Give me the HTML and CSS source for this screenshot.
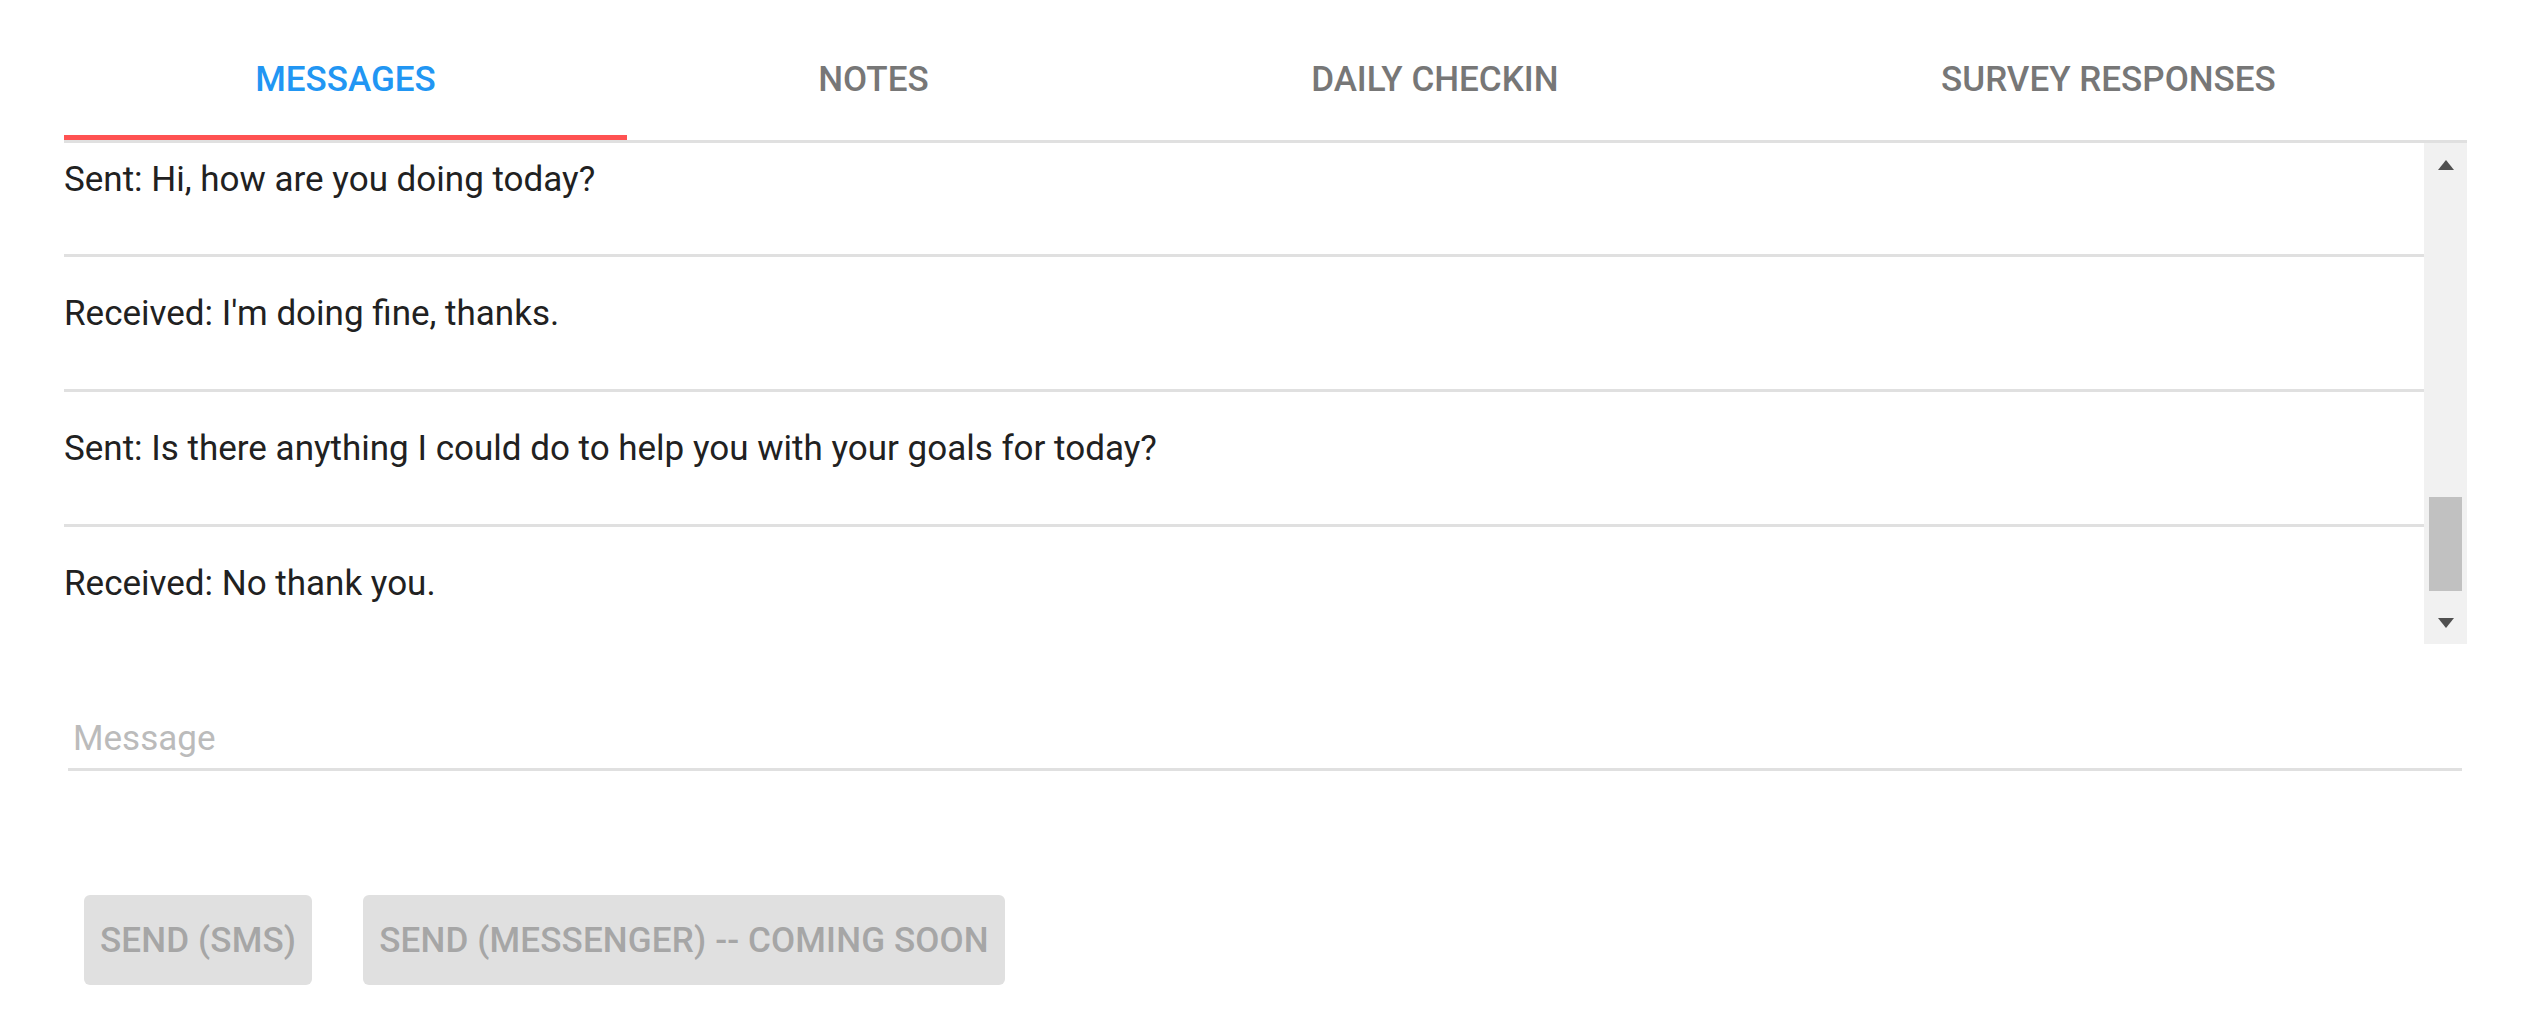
FILE: index.html
```html
<!DOCTYPE html>
<html lang="en">
<head>
<meta charset="utf-8">
<title>Messages</title>
<link rel="stylesheet" href="styles.css">
</head>
<body>
<div class="page">
  <nav class="tabs">
    <div class="tab active">MESSAGES</div>
    <div class="tab">NOTES</div>
    <div class="tab">DAILY CHECKIN</div>
    <div class="tab">SURVEY RESPONSES</div>
  </nav>
  <section class="thread">
    <div class="viewport">
      <div class="msg first">Sent: Hi, how are you doing today?</div>
      <div class="msg">Received: I'm doing fine, thanks.</div>
      <div class="msg">Sent: Is there anything I could do to help you with your goals for today?</div>
      <div class="msg last">Received: No thank you.</div>
    </div>
    <div class="scrollbar">
      <div class="sb-btn"><span class="arrow-up"></span></div>
      <div class="sb-track"><div class="sb-thumb"></div></div>
      <div class="sb-btn"><span class="arrow-down"></span></div>
    </div>
  </section>
  <div class="field">
    <div class="placeholder">Message</div>
  </div>
  <div class="actions">
    <button class="btn" disabled>SEND (SMS)</button>
    <button class="btn" disabled>SEND (MESSENGER) -- COMING SOON</button>
  </div>
</div>
</body>
</html>
```

FILE: styles.css
```css
html, body {
  margin: 0;
  padding: 0;
  background: #ffffff;
}
body {
  font-family: Roboto, "Liberation Sans", Arial, sans-serif;
  color: #212121;
}
.page {
  padding: 20px 56px 0 64px;
}
.tabs {
  display: flex;
  border-bottom: 3px solid #e0e0e0;
}
.tab {
  flex: 1 1 auto;
  height: 112px;
  padding-top: 3px;
  display: flex;
  align-items: center;
  justify-content: center;
  font-size: 35px;
  font-weight: 500;
  color: #777777;
  border-bottom: 5px solid transparent;
  white-space: nowrap;
}
.tab.active {
  color: #2196f3;
  border-bottom-color: #ff5252;
}
.thread {
  display: flex;
  height: 501px;
}
.viewport {
  flex: 1 1 auto;
  overflow: hidden;
}
.msg {
  font-size: 35px;
  line-height: 40px;
  padding: 37px 0 55px 0;
  border-bottom: 3px solid #e0e0e0;
  white-space: nowrap;
}
.msg.first {
  padding-top: 17px;
  padding-bottom: 54px;
}
.msg.last {
  padding-bottom: 41px;
  border-bottom: none;
}
.scrollbar {
  width: 43px;
  flex: 0 0 43px;
  background: #f1f1f1;
  display: flex;
  flex-direction: column;
}
.sb-btn {
  height: 43px;
  display: flex;
  align-items: center;
  justify-content: center;
}
.arrow-up {
  width: 0;
  height: 0;
  border-left: 8.5px solid transparent;
  border-right: 8.5px solid transparent;
  border-bottom: 10px solid #505050;
}
.arrow-down {
  width: 0;
  height: 0;
  border-left: 8.5px solid transparent;
  border-right: 8.5px solid transparent;
  border-top: 10px solid #505050;
}
.sb-track {
  flex: 1 1 auto;
  display: flex;
  flex-direction: column;
  justify-content: flex-end;
  padding: 0 5px 10px 5px;
}
.sb-thumb {
  height: 94px;
  background: #c1c1c1;
}
.field {
  margin: 0 5px 0 4px;
  padding-top: 75px;
  padding-bottom: 9px;
  border-bottom: 3px solid #e0e0e0;
}
.placeholder {
  font-size: 35px;
  line-height: 40px;
  padding-left: 5px;
  color: #bbbbbb;
}
.actions {
  display: flex;
  gap: 51px;
  margin-top: 124px;
  padding-left: 20px;
}
.btn {
  height: 90px;
  padding: 0 16px;
  border: none;
  border-radius: 6px;
  background: #e0e0e0;
  color: #a6a6a6;
  font-family: Roboto, "Liberation Sans", Arial, sans-serif;
  font-size: 35px;
  font-weight: 500;
  letter-spacing: 0.15px;
  white-space: nowrap;
}
```
